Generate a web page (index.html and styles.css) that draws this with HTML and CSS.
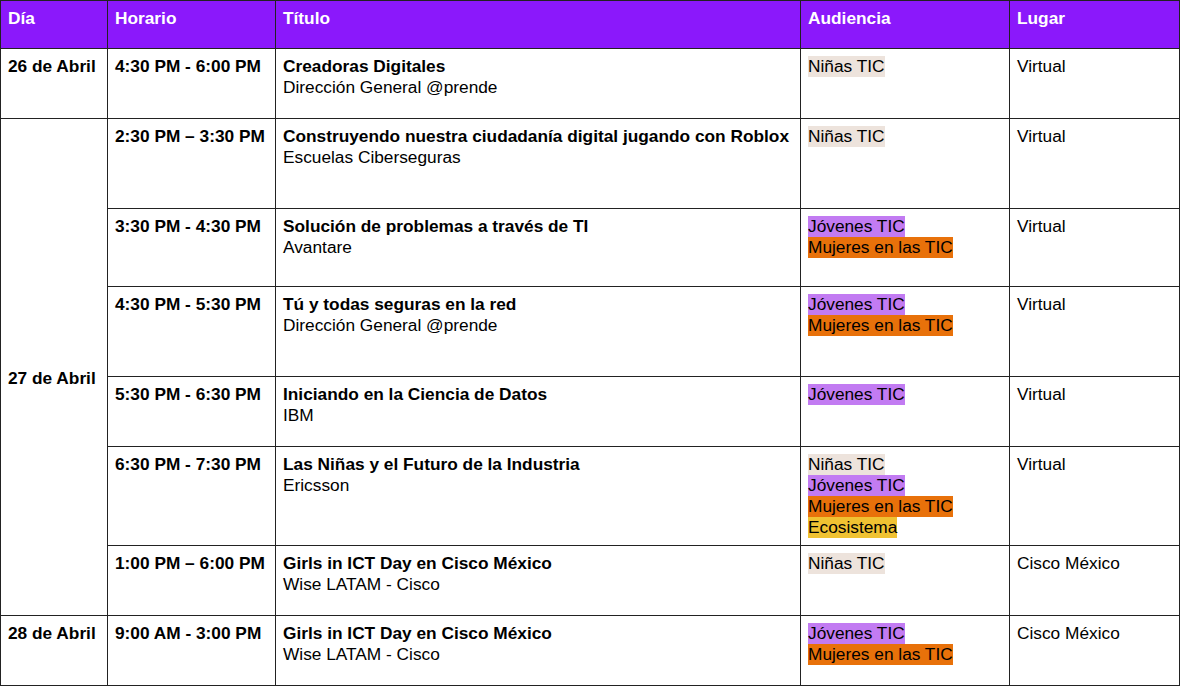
FILE: index.html
```html
<!DOCTYPE html>
<html lang="es">
<head>
    <meta charset="UTF-8">
    <title>Agenda Girls in ICT Day</title>
    <link rel="stylesheet" href="styles.css">
</head>
<body>
    <table class="agenda">
        <colgroup>
            <col class="c-dia">
            <col class="c-horario">
            <col class="c-titulo">
            <col class="c-audiencia">
            <col class="c-lugar">
        </colgroup>
        <thead>
            <tr>
                <th>Día</th>
                <th>Horario</th>
                <th>Título</th>
                <th>Audiencia</th>
                <th>Lugar</th>
            </tr>
        </thead>
        <tbody>
            <tr class="h70">
                <td class="dia">26 de Abril</td>
                <td class="hora">4:30 PM - 6:00 PM</td>
                <td><b>Creadoras Digitales</b><br>Dirección General @prende</td>
                <td><span class="tag ninas">Niñas TIC</span></td>
                <td>Virtual</td>
            </tr>
            <tr class="h90">
                <td class="dia dia-largo" rowspan="6">27 de Abril</td>
                <td class="hora">2:30 PM – 3:30 PM</td>
                <td><b>Construyendo nuestra ciudadanía digital jugando con Roblox</b><br>Escuelas Ciberseguras</td>
                <td><span class="tag ninas">Niñas TIC</span></td>
                <td>Virtual</td>
            </tr>
            <tr class="h78">
                <td class="hora">3:30 PM - 4:30 PM</td>
                <td><b>Solución de problemas a través de TI</b><br>Avantare</td>
                <td><span class="tag jovenes">Jóvenes TIC</span><br><span class="tag mujeres">Mujeres en las TIC</span></td>
                <td>Virtual</td>
            </tr>
            <tr class="h90">
                <td class="hora">4:30 PM - 5:30 PM</td>
                <td><b>Tú y todas seguras en la red</b><br>Dirección General @prende</td>
                <td><span class="tag jovenes">Jóvenes TIC</span><br><span class="tag mujeres">Mujeres en las TIC</span></td>
                <td>Virtual</td>
            </tr>
            <tr class="h70">
                <td class="hora">5:30 PM - 6:30 PM</td>
                <td><b>Iniciando en la Ciencia de Datos</b><br>IBM</td>
                <td><span class="tag jovenes">Jóvenes TIC</span></td>
                <td>Virtual</td>
            </tr>
            <tr class="h99">
                <td class="hora">6:30 PM - 7:30 PM</td>
                <td><b>Las Niñas y el Futuro de la Industria</b><br>Ericsson</td>
                <td><span class="tag ninas">Niñas TIC</span><br><span class="tag jovenes">Jóvenes TIC</span><br><span class="tag mujeres">Mujeres en las TIC</span><br><span class="tag eco">Ecosistema</span></td>
                <td>Virtual</td>
            </tr>
            <tr class="h70">
                <td class="hora">1:00 PM – 6:00 PM</td>
                <td><b>Girls in ICT Day en Cisco México</b><br>Wise LATAM - Cisco</td>
                <td><span class="tag ninas">Niñas TIC</span></td>
                <td>Cisco México</td>
            </tr>
            <tr class="h70">
                <td class="dia">28 de Abril</td>
                <td class="hora">9:00 AM - 3:00 PM</td>
                <td><b>Girls in ICT Day en Cisco México</b><br>Wise LATAM - Cisco</td>
                <td><span class="tag jovenes">Jóvenes TIC</span><br><span class="tag mujeres">Mujeres en las TIC</span></td>
                <td>Cisco México</td>
            </tr>
        </tbody>
    </table>
</body>
</html>
```

FILE: styles.css
```css
body {
    margin: 0;
    padding: 0;
    background: #fff;
    font-family: "Liberation Sans", Arial, sans-serif;
    color: #000;
}
.agenda {
    width: 1179px;
    border-collapse: collapse;
    table-layout: fixed;
    font-size: 17.3px;
    line-height: 21px;
}
.c-dia { width: 107px; }
.c-horario { width: 168px; }
.c-titulo { width: 525px; }
.c-audiencia { width: 209px; }
.c-lugar { width: 170px; }
th, td {
    border: 1px solid #222;
    padding: 7px 4px 7px 7px;
    text-align: left;
    vertical-align: top;
}
th {
    background-color: #8b18fb;
    color: #fff;
    font-weight: bold;
    height: 33px;
}
.dia, .hora {
    font-weight: bold;
    white-space: nowrap;
}
.dia-largo {
    vertical-align: middle;
    padding-top: 30px;
}
.h70 { height: 70px; }
.h78 { height: 78px; }
.h90 { height: 90px; }
.h99 { height: 99px; }
.tag {
    display: inline-block;
}
.ninas { background-color: #ede3dc; }
.jovenes { background-color: #c27bf2; }
.mujeres { background-color: #e8710a; }
.eco { background-color: #f0c232; }
```
